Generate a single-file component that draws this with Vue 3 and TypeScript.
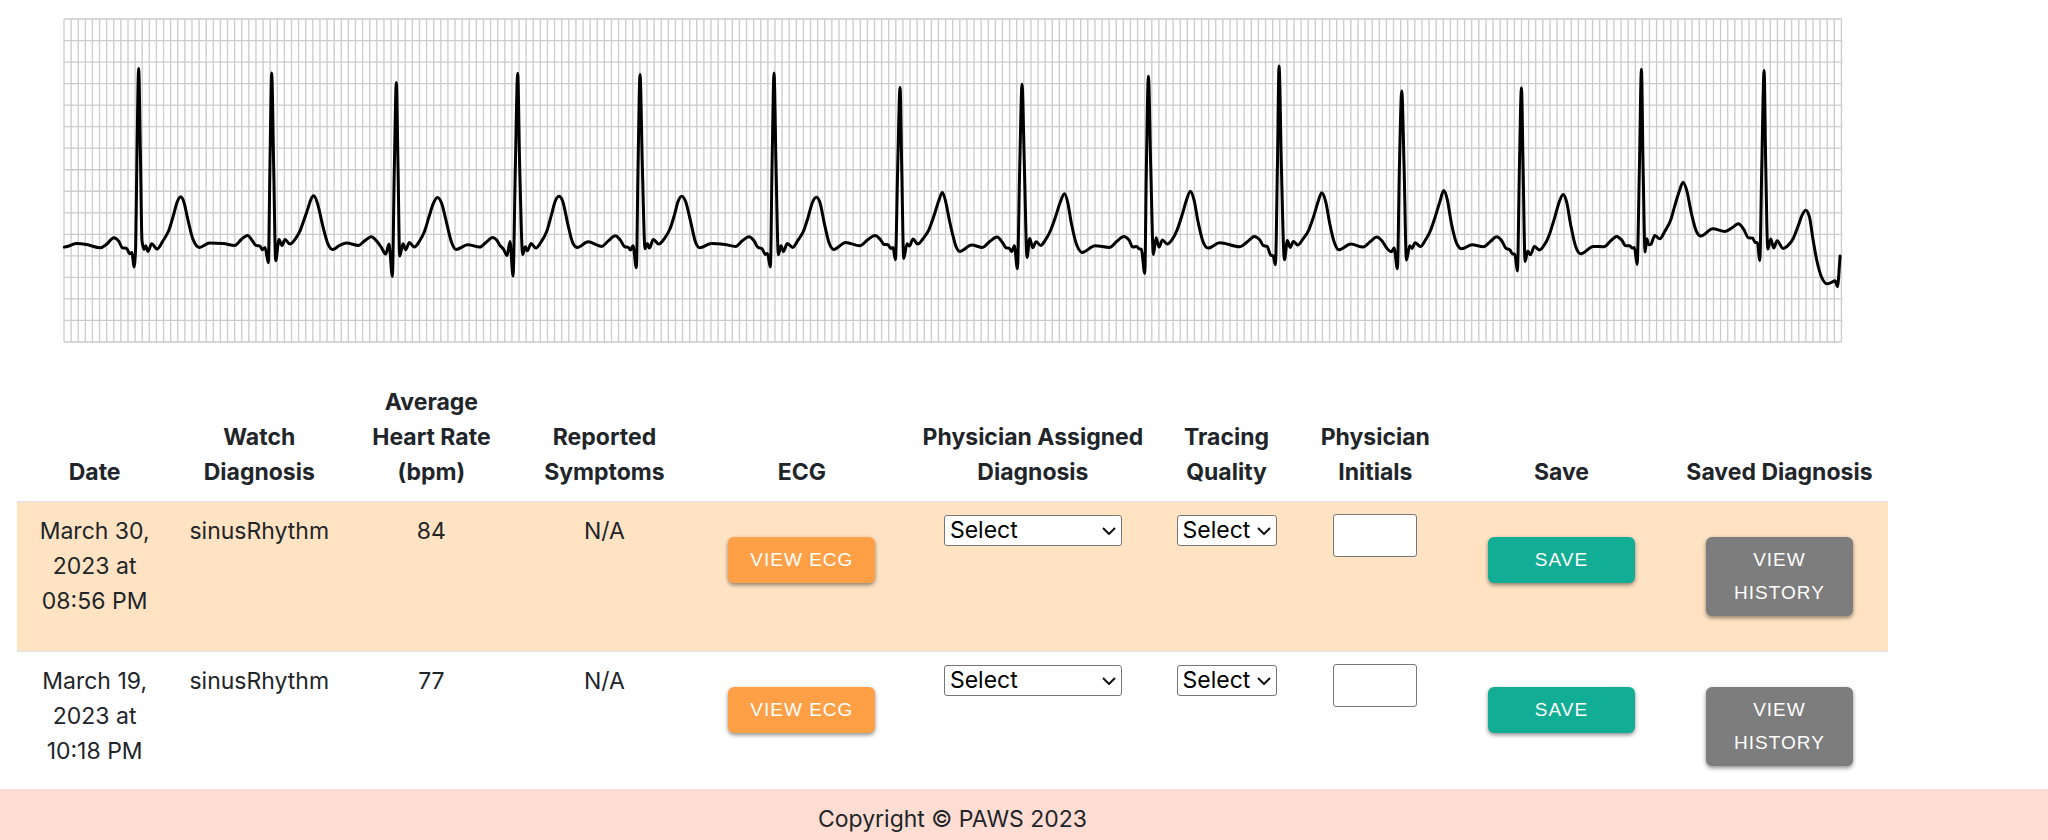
<script setup lang="ts">
import { reactive } from 'vue'

interface Recording {
  id: number
  date: string
  watchDiagnosis: string
  heartRate: number
  symptoms: string
  diagnosis: string
  quality: string
  initials: string
}

interface Strip {
  start: number
  samples: number[][]
}

const columns = [
  { title: 'Date', width: '8.3%' },
  { title: 'Watch Diagnosis', width: '9.3%' },
  { title: 'Average Heart Rate (bpm)', width: '9.1%' },
  { title: 'Reported Symptoms', width: '9.4%' },
  { title: 'ECG', width: '11.7%' },
  { title: 'Physician Assigned Diagnosis', width: '13%' },
  { title: 'Tracing Quality', width: '7.7%' },
  { title: 'Physician Initials', width: '8.2%' },
  { title: 'Save', width: '11.7%' },
  { title: 'Saved Diagnosis', width: '11.6%' },
]

const recordings = reactive<Recording[]>([
  { id: 1, date: 'March 30, 2023 at 08:56 PM', watchDiagnosis: 'sinusRhythm', heartRate: 84, symptoms: 'N/A', diagnosis: '', quality: '', initials: '' },
  { id: 2, date: 'March 19, 2023 at 10:18 PM', watchDiagnosis: 'sinusRhythm', heartRate: 77, symptoms: 'N/A', diagnosis: '', quality: '', initials: '' },
])

// Extent of the recording in sample units
const chart = { x: 193, y: 56, width: 5332, height: 970, columns: 250, rows: 15 }

const strips: Strip[] = [
  { start: 150, samples: [
    [44, 741], [60, 737], [80, 730], [110, 733], [152, 743], [170, 733], [193, 713], [207, 723], [218, 743], [231, 745],
    [240, 761], [247, 757], [253, 801], [258, 740], [262, 450], [267, 205], [272, 450], [277, 722], [283, 748], [288, 737],
    [295, 754], [306, 731], [322, 747], [340, 722], [357, 692], [370, 650], [382, 607], [393, 590], [403, 607], [415, 660],
    [430, 718], [449, 742], [480, 729], [520, 730], [555, 736], [575, 718], [594, 706], [608, 722], [619, 736], [631, 738],
    [638, 749], [646, 742], [656, 788], [661, 480], [666, 218], [672, 500], [678, 782], [688, 718], [697, 736], [706, 718],
    [721, 732], [738, 715], [752, 690], [768, 645], [792, 587], [804, 612], [820, 680], [835, 732], [849, 748], [870, 736],
    [890, 729], [927, 736], [945, 722], [965, 710], [982, 724], [995, 742], [1008, 762], [1018, 732], [1028, 829], [1034, 500],
    [1040, 247], [1045, 500], [1050, 768], [1060, 731], [1068, 749], [1079, 727], [1094, 741], [1110, 722], [1124, 695], [1138, 650],
    [1150, 612], [1163, 592], [1176, 610], [1190, 665], [1205, 725], [1219, 748], [1254, 734], [1290, 741], [1310, 726], [1329, 712],
    [1341, 720],
  ] },
  { start: 1500, samples: [
    [0, 735], [12, 748], [22, 767], [31, 724], [40, 828], [47, 500], [54, 219], [60, 500], [69, 763], [77, 740],
    [83, 752], [94, 730], [109, 744], [125, 724], [141, 694], [155, 645], [167, 602], [178, 588], [189, 603], [205, 675],
    [220, 730], [233, 742], [265, 725], [306, 739], [325, 723], [347, 707], [362, 720], [375, 740], [386, 742], [392, 750],
    [400, 737], [410, 803], [415, 500], [421, 223], [428, 500], [436, 746], [443, 730], [449, 744], [461, 718], [477, 732],
    [495, 714], [511, 686], [524, 645], [535, 604], [546, 588], [558, 605], [573, 665], [587, 725], [600, 743], [635, 730],
    [675, 733], [708, 739], [728, 722], [748, 710], [763, 722], [774, 741], [787, 746], [797, 763], [803, 760], [812, 801],
    [817, 500], [823, 218], [829, 500], [836, 764], [844, 737], [851, 754], [863, 730], [879, 742], [895, 720], [911, 694],
    [925, 652], [938, 607], [950, 591], [960, 605], [975, 675], [988, 728], [1002, 748], [1038, 727], [1080, 737], [1105, 718],
    [1126, 706], [1141, 717], [1153, 733], [1165, 734], [1173, 745], [1180, 742], [1187, 779], [1194, 500], [1201, 262], [1206, 500],
    [1212, 775], [1222, 731], [1229, 738], [1240, 717], [1254, 732], [1270, 716], [1287, 690], [1303, 646], [1316, 605], [1328, 577],
    [1338, 605],
  ] },
  { start: 2850, samples: [
    [0, 665], [12, 716], [20, 742], [30, 754], [66, 735], [98, 742], [120, 724], [142, 711], [158, 727], [169, 743],
    [179, 745], [186, 754], [194, 737], [203, 806], [210, 500], [217, 252], [224, 500], [232, 772], [240, 715], [249, 743],
    [259, 725], [273, 736], [288, 718], [302, 692], [318, 648], [332, 605], [344, 581], [354, 607], [365, 670], [380, 732],
    [397, 757], [436, 737], [479, 742], [500, 725], [522, 709], [538, 720], [549, 741], [561, 739], [568, 746], [575, 748],
    [585, 820], [590, 500], [596, 228], [603, 500], [611, 763], [619, 713], [628, 741], [638, 720], [653, 732], [668, 717],
    [682, 690], [697, 645], [710, 600], [722, 573], [733, 600], [745, 665], [760, 725], [775, 744], [810, 728], [870, 740],
    [893, 725], [914, 709], [930, 719], [940, 736], [952, 739], [963, 765], [970, 767], [977, 794], [983, 500], [988, 197],
    [995, 500], [1004, 779], [1013, 721], [1021, 742], [1031, 724], [1044, 735], [1060, 716], [1076, 692], [1092, 648], [1104, 608],
    [1116, 578], [1128, 605], [1140, 670], [1153, 725], [1167, 749], [1203, 732], [1240, 741], [1262, 724], [1281, 711], [1298, 724],
    [1311, 744], [1325, 755], [1333, 744], [1343, 806], [1349, 500], [1356, 272],
  ] },
  { start: 4200, samples: [
    [13, 500], [20, 780], [30, 737], [37, 745], [46, 728], [62, 739], [78, 718], [92, 692], [107, 648], [120, 606],
    [132, 571], [143, 600], [155, 670], [170, 728], [186, 746], [217, 734], [251, 740], [272, 724], [291, 710], [306, 722],
    [318, 744], [330, 749], [338, 761], [345, 762], [353, 813], [359, 500], [365, 263], [370, 500], [376, 784], [384, 753],
    [392, 764], [404, 739], [419, 750], [436, 731], [450, 700], [464, 655], [478, 607], [490, 583], [501, 607], [513, 675],
    [528, 740], [543, 761], [581, 739], [613, 740], [632, 723], [651, 709], [666, 720], [678, 737], [690, 737], [697, 744],
    [704, 742], [712, 793], [719, 500], [725, 207], [730, 500], [736, 756], [741, 716], [747, 734], [753, 733], [765, 706],
    [780, 716], [795, 694], [812, 662], [825, 617], [839, 572], [850, 546], [862, 575], [875, 640], [890, 694], [903, 708],
    [939, 686], [976, 694], [998, 682], [1016, 671], [1032, 688], [1046, 713], [1058, 714], [1066, 727], [1073, 728], [1080, 781],
    [1086, 500], [1093, 211], [1098, 500], [1104, 747], [1113, 717], [1122, 744], [1132, 722], [1150, 745], [1165, 736], [1180, 716],
    [1195, 678], [1207, 645], [1218, 630], [1229, 650], [1240, 720], [1252, 785], [1265, 830], [1281, 851], [1295, 847], [1306, 842],
    [1313, 860], [1321, 768],
  ] },
]

// Joins the samples with cubic segments that never overshoot a peak
function tracePath(all: Strip[]): string {
  const p = all.flatMap((s) => s.samples.map(([x, y]) => [x + s.start, y]))
  const slope = p.slice(1).map((q, i) => (q[1] - p[i][1]) / (q[0] - p[i][0]))
  const tangent = p.map((_, i) => {
    if (i === 0 || i === p.length - 1) return slope[Math.min(i, slope.length - 1)]
    const a = slope[i - 1]
    const b = slope[i]
    if (a * b <= 0) return 0
    const mean = (p[i + 1][1] - p[i - 1][1]) / (p[i + 1][0] - p[i - 1][0])
    return Math.sign(a) * Math.min(2 * Math.abs(a), 2 * Math.abs(b), Math.abs(mean))
  })
  let d = `M${p[0][0]} ${p[0][1]}`
  for (let i = 1; i < p.length; i++) {
    const h = (p[i][0] - p[i - 1][0]) / 3
    const c1 = [p[i - 1][0] + h, p[i - 1][1] + h * tangent[i - 1]]
    const c2 = [p[i][0] - h, p[i][1] - h * tangent[i]]
    d += `C${[...c1, ...c2, ...p[i]].map((n) => n.toFixed(1)).join(' ')}`
  }
  return d
}

function gridPath(): string {
  let d = ''
  for (let i = 0; i <= chart.columns; i++) {
    d += `M${(chart.x + (i * chart.width) / chart.columns).toFixed(1)} ${chart.y}v${chart.height}`
  }
  for (let i = 0; i <= chart.rows; i++) {
    d += `M${chart.x} ${(chart.y + (i * chart.height) / chart.rows).toFixed(1)}h${chart.width}`
  }
  return d
}

const trace = tracePath(strips)
const grid = gridPath()
const viewBox = `${chart.x} ${chart.y} ${chart.width} ${chart.height}`
</script>

<template>
  <div class="page">
    <main class="content">
      <svg class="ecg" :viewBox="viewBox" preserveAspectRatio="none" role="img" aria-label="ECG tracing">
        <path class="grid" :d="grid" />
        <path class="trace" :d="trace" />
      </svg>

      <table class="records">
        <colgroup>
          <col v-for="c in columns" :key="c.title" :style="{ width: c.width }" />
        </colgroup>
        <thead>
          <tr>
            <th v-for="c in columns" :key="c.title" scope="col">{{ c.title }}</th>
          </tr>
        </thead>
        <tbody>
          <tr v-for="r in recordings" :key="r.id">
            <td>{{ r.date }}</td>
            <td>{{ r.watchDiagnosis }}</td>
            <td>{{ r.heartRate }}</td>
            <td>{{ r.symptoms }}</td>
            <td><button type="button" class="btn view">View ECG</button></td>
            <td>
              <span class="picker wide">
                <select v-model="r.diagnosis" aria-label="Physician Assigned Diagnosis">
                  <option value="">Select</option>
                </select>
                <svg class="chevron" viewBox="0 0 14 8" aria-hidden="true"><path d="M1 1l6 6 6-6" /></svg>
              </span>
            </td>
            <td>
              <span class="picker">
                <select v-model="r.quality" aria-label="Tracing Quality">
                  <option value="">Select</option>
                </select>
                <svg class="chevron" viewBox="0 0 14 8" aria-hidden="true"><path d="M1 1l6 6 6-6" /></svg>
              </span>
            </td>
            <td><input v-model="r.initials" class="initials" type="text" aria-label="Physician Initials" /></td>
            <td><button type="button" class="btn save">Save</button></td>
            <td><button type="button" class="btn history">View History</button></td>
          </tr>
        </tbody>
      </table>
    </main>
    <footer class="footer">Copyright © PAWS 2023</footer>
  </div>
</template>

<style>
body {
  margin: 0;
  background: #fff;
}
</style>

<style scoped>
.page {
  box-sizing: border-box;
  min-height: 100vh;
  padding-bottom: 39px;
  font: 400 23px/35px Inter, "Liberation Sans", sans-serif;
  color: #212529;
}

.content {
  margin: 0 160px 0 17px;
  padding-top: 19px;
}

.ecg {
  display: block;
  overflow: visible;
  width: 95%;
  height: 323px;
  margin: 0 auto 30px;
}

.grid {
  fill: none;
  stroke: #ccc;
  stroke-width: 4;
}

.trace {
  fill: none;
  stroke: #000;
  stroke-width: 9;
  stroke-linecap: round;
  stroke-linejoin: round;
}

.records {
  width: 100%;
  table-layout: fixed;
  border-collapse: collapse;
  text-align: center;
}

th {
  padding: 13px 8px 11px;
  font-weight: 700;
  vertical-align: bottom;
}

td {
  padding: 12px 16px;
  border-top: 1px solid #dee2e6;
  vertical-align: top;
}

tbody tr:nth-child(odd) {
  background: #ffe3c3;
}

.btn {
  display: block;
  width: 147px;
  margin: 23px auto;
  padding: 6px 16px 7px;
  border: 0;
  border-radius: 6px;
  box-shadow: 0 2px 4px rgba(0, 0, 0, 0.45);
  font: 400 19px/33px "Liberation Sans", sans-serif;
  letter-spacing: 1px;
  text-transform: uppercase;
  color: #fff;
}

.view {
  background: #ff9f46;
}

.save {
  background: #11ad94;
}

.history {
  background: #7d7d7d;
}

.picker {
  display: block;
  position: relative;
  width: 100px;
  margin: 1px auto 0;
}

.picker.wide {
  width: 178px;
}

select {
  display: block;
  box-sizing: border-box;
  width: 100%;
  height: 31px;
  padding: 0 24px 0 5px;
  border: 1px solid #767676;
  border-radius: 3px;
  background: #fff;
  appearance: none;
  font: inherit;
  line-height: 29px;
  color: #000;
}

.chevron {
  position: absolute;
  top: 12px;
  right: 6px;
  width: 14px;
  height: 8px;
  fill: none;
  stroke: #111;
  stroke-width: 2;
  pointer-events: none;
}

.initials {
  display: block;
  box-sizing: border-box;
  width: 84px;
  height: 43px;
  margin: 0 auto;
  border: 1px solid #767676;
  border-radius: 3px;
  background: #fff;
  font: inherit;
}

.footer {
  position: fixed;
  right: 0;
  bottom: 0;
  left: 0;
  padding: 13px 143px 3px 0;
  background: #ffddd3;
  text-align: center;
}
</style>
